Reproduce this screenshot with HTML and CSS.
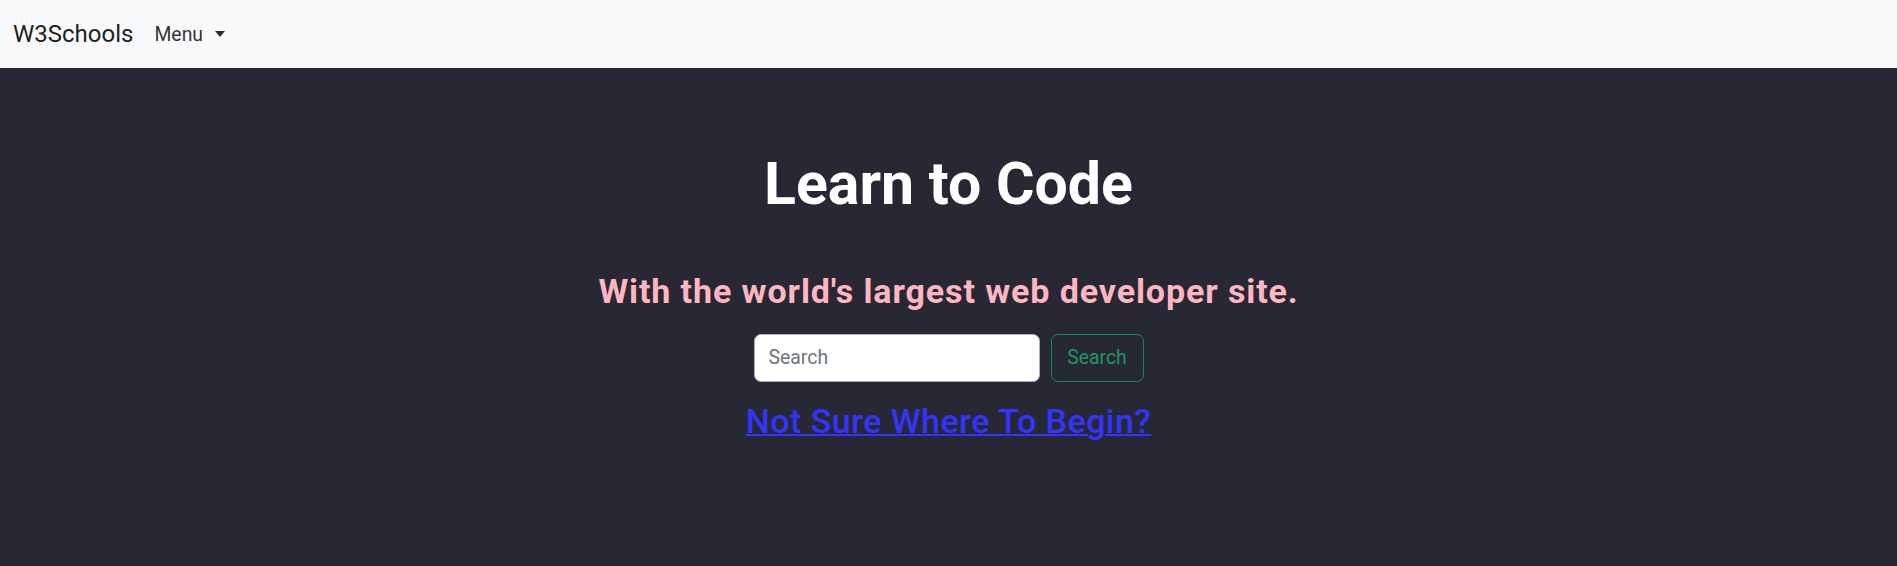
FILE: index.html
```html
<!DOCTYPE html>
<html lang="en">
<head>
<meta charset="utf-8">
<title>W3Schools</title>
<link rel="stylesheet" href="styles.css">
</head>
<body>
<nav class="navbar">
  <a class="brand" href="#">W3Schools</a>
  <a class="menu" href="#">Menu<span class="caret"></span></a>
</nav>
<section class="hero">
  <h1 class="title">Learn to Code</h1>
  <h3 class="subtitle">With the world's largest web developer site.</h3>
  <form class="search">
    <input class="search-input" type="text" placeholder="Search">
    <button class="search-btn" type="button">Search</button>
  </form>
  <h3 class="begin"><a href="#">Not Sure Where To Begin?</a></h3>
</section>
</body>
</html>
```
FILE: styles.css
```css
* { box-sizing: border-box; }
html, body { margin: 0; height: 100%; }
body {
  font-family: Roboto, "Open Sans", sans-serif;
  background: #282835;
}
.navbar {
  height: 68px;
  background: #f8f9fa;
  display: flex;
  align-items: center;
  padding: 0 13px;
}
.brand {
  font-size: 24px;
  color: rgba(0,0,0,.9);
  text-decoration: none;
  margin-right: 21px;
}
.menu {
  font-size: 19.4px;
  color: rgba(0,0,0,.82);
  text-decoration: none;
  display: flex;
  align-items: center;
}
.caret {
  display: inline-block;
  margin-left: 12px;
  border-top: 6px solid rgba(0,0,0,.82);
  border-left: 5.5px solid transparent;
  border-right: 5.5px solid transparent;
}
.hero {
  background: #282835;
  height: calc(100% - 68px);
  text-align: center;
  padding-top: 81px;
}
.title {
  margin: 0;
  font-size: 59px;
  line-height: 1.2;
  font-weight: 700;
  color: #fff;
}
.subtitle {
  margin: 51px 0 0;
  font-size: 34px;
  line-height: 1.2;
  font-weight: 700;
  letter-spacing: 0.9px;
  color: #ffb6c1;
}
.search {
  margin-top: 22px;
  display: flex;
  justify-content: center;
  gap: 11px;
}
.search-input {
  width: 286px;
  height: 48px;
  border: 1.5px solid #adb2b8;
  border-radius: 7px;
  padding: 0 14px;
  font: inherit;
  font-size: 19.4px;
  color: #212529;
  background: #fff;
}
.search-input::placeholder { color: #6c757d; }
.search-btn {
  width: 93px;
  height: 48px;
  border: 1.2px solid #198754;
  border-radius: 7px;
  background: transparent;
  color: #1a9a5c;
  font: inherit;
  font-size: 19.4px;
}
.begin {
  margin: 19px 0 0;
  font-size: 34px;
  line-height: 1.2;
  font-weight: 500;
  letter-spacing: 0.45px;
}
.begin a { color: #3333ff; text-decoration-thickness: 2px; }
```
